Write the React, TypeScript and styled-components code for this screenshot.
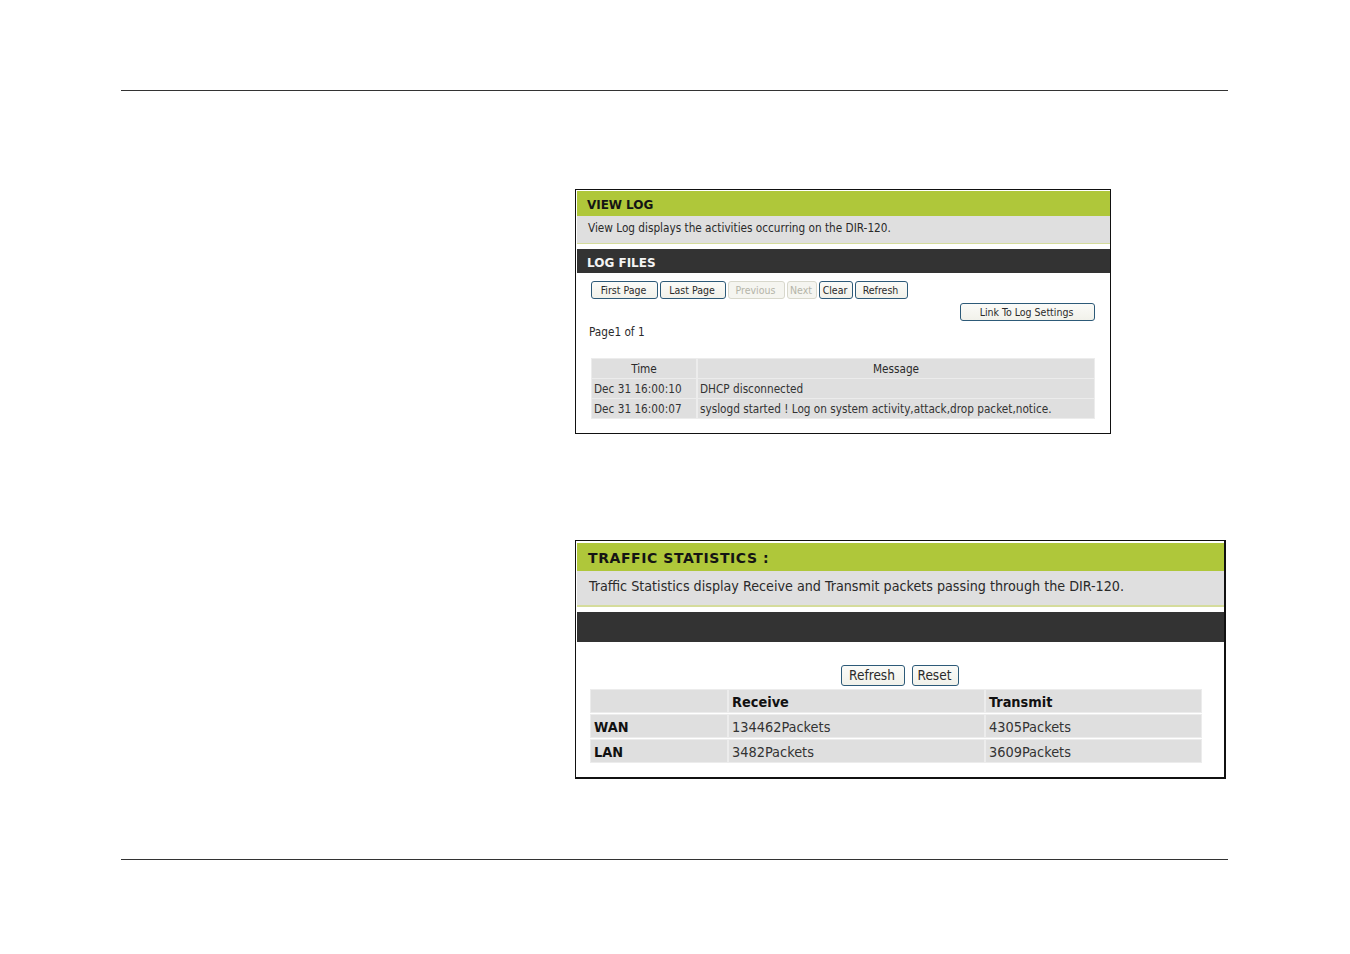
import React from 'react';
import styled, { createGlobalStyle } from 'styled-components';

const GlobalStyle = createGlobalStyle`
  html, body {
    margin: 0;
    padding: 0;
    background: #fff;
  }
  body {
    font-family: "DejaVu Sans Condensed", "DejaVu Sans", sans-serif;
    font-stretch: condensed;
    color: #222;
  }
`;

const Sheet = styled.div`
  width: 1350px;
  height: 954px;
  box-sizing: border-box;
  padding: 90px 122px 0 121px;
  display: flex;
  flex-direction: column;
  overflow: hidden;
`;

const Rule = styled.div<{ $top?: number }>`
  height: 1px;
  background: #333;
  margin-top: ${({ $top }) => $top ?? 0}px;
  flex: none;
`;

const Shot = styled.section<{ $width: number; $top: number; $thick?: boolean }>`
  box-sizing: border-box;
  width: ${({ $width }) => $width}px;
  margin-left: 454px;
  margin-top: ${({ $top }) => $top}px;
  border: 1px solid #111;
  border-width: ${({ $thick }) => ($thick ? '1px 2px 2px 1px' : '1px')};
  padding: ${({ $thick }) => ($thick ? 2 : 1)}px 0 ${({ $thick }) => ($thick ? 12 : 14)}px 1px;
  flex: none;
  background: #fff;
`;

const Title = styled.h2<{ $big?: boolean }>`
  margin: 0;
  height: ${({ $big }) => ($big ? 28 : 25)}px;
  line-height: ${({ $big }) => ($big ? 30 : 29)}px;
  padding-left: ${({ $big }) => ($big ? 11 : 10)}px;
  background: #afc73a;
  color: #141414;
  font-family: "DejaVu Sans", sans-serif;
  font-stretch: normal;
  font-size: ${({ $big }) => ($big ? 14 : 12)}px;
  font-weight: 700;
  letter-spacing: ${({ $big }) => ($big ? 0.58 : -0.05)}px;
`;

const Intro = styled.p<{ $big?: boolean }>`
  margin: 0;
  box-sizing: border-box;
  height: ${({ $big }) => ($big ? 36 : 28)}px;
  line-height: ${({ $big }) => ($big ? 30 : 24)}px;
  padding-left: ${({ $big }) => ($big ? 12 : 11)}px;
  background: #dfdfdf;
  border-bottom: ${({ $big }) => ($big ? 2 : 1)}px solid #d5dc9c;
  font-size: ${({ $big }) => ($big ? 14.2 : 11.7)}px;
  color: #2a2a2a;
`;

const DarkBar = styled.h3<{ $big?: boolean }>`
  margin: 5px 0 0;
  height: ${({ $big }) => ($big ? 30 : 24)}px;
  line-height: 28px;
  padding-left: 10px;
  background: #333333;
  color: #f4f4f4;
  font-family: "DejaVu Sans", sans-serif;
  font-stretch: normal;
  font-size: 12px;
  font-weight: 700;
  letter-spacing: 0;
`;

const Buttons = styled.div<{ $center?: boolean }>`
  display: flex;
  gap: ${({ $center }) => ($center ? 7 : 2)}px;
  justify-content: ${({ $center }) => ($center ? 'center' : 'flex-start')};
  padding: ${({ $center }) => ($center ? '23px 1px 0 0' : '8px 0 0 14px')};
`;

const SettingsRow = styled.div`
  display: flex;
  justify-content: flex-end;
  padding: 4px 15px 0 0;
`;

const Btn = styled.button<{ $w: number; $h?: number; $big?: boolean }>`
  box-sizing: border-box;
  width: ${({ $w }) => $w}px;
  height: ${({ $h }) => $h ?? 18}px;
  padding: 0 2px 0 0;
  border: 1px solid #2d5a78;
  border-radius: 3px;
  background: linear-gradient(#fbfbf8, #f1f1ea);
  color: #2a2a2a;
  font-family: inherit;
  font-stretch: inherit;
  font-size: ${({ $big }) => ($big ? 13.5 : 10.5)}px;
  line-height: 1;
  &:disabled {
    border-color: #d8d8cc;
    color: #b4b4a8;
    background: #f5f5f0;
  }
`;

const PageNote = styled.p`
  margin: 0;
  padding: 1px 0 0 12px;
  height: 37px;
  box-sizing: border-box;
  line-height: 20px;
  font-size: 11.7px;
  color: #2a2a2a;
`;

const Grid = styled.table<{ $big?: boolean }>`
  border-collapse: separate;
  border-spacing: ${({ $big }) => ($big ? '2px 3px' : '2px 1px')};
  table-layout: fixed;
  margin: ${({ $big }) => ($big ? 1 : 0)}px 0 0 ${({ $big }) => ($big ? 12 : 13)}px;
  width: ${({ $big }) => ($big ? 614 : 506)}px;
  font-size: ${({ $big }) => ($big ? 14.4 : 11.7)}px;
  color: #2a2a2a;
`;

const HeadCell = styled.th<{ $big?: boolean; $w?: number }>`
  width: ${({ $w }) => ($w ? `${$w}px` : 'auto')};
  height: ${({ $big }) => ($big ? 20 : 19)}px;
  padding: ${({ $big }) => ($big ? '2px 3px 0' : '0 2px')};
  box-sizing: content-box;
  background: #dfdfdf;
  box-shadow: 0 0 0 1px #ececec;
  font-weight: ${({ $big }) => ($big ? 700 : 400)};
  text-align: ${({ $big }) => ($big ? 'left' : 'center')};
  color: ${({ $big }) => ($big ? '#111' : '#2a2a2a')};
`;

const Cell = styled.td<{ $big?: boolean; $strong?: boolean }>`
  height: ${({ $big }) => ($big ? 20 : 19)}px;
  padding: ${({ $big }) => ($big ? '2px 3px 0' : '0 2px')};
  background: #dfdfdf;
  box-shadow: 0 0 0 1px #ececec;
  white-space: nowrap;
  overflow: hidden;
  font-weight: ${({ $strong }) => ($strong ? 700 : 400)};
  color: ${({ $strong }) => ($strong ? '#111' : '#333')};
`;

const logRows = [
  ['Dec 31 16:00:10', 'DHCP disconnected'],
  ['Dec 31 16:00:07', 'syslogd started ! Log on system activity,attack,drop packet,notice.'],
];

const trafficRows = [
  ['WAN', '134462Packets', '4305Packets'],
  ['LAN', '3482Packets', '3609Packets'],
];

export default function App() {
  return (
    <Sheet>
      <GlobalStyle />
      <Rule />

      <Shot $width={536} $top={98}>
        <Title>VIEW LOG</Title>
        <Intro>View Log displays the activities occurring on the DIR-120.</Intro>
        <DarkBar>LOG FILES</DarkBar>
        <Buttons>
          <Btn $w={67}>First Page</Btn>
          <Btn $w={66}>Last Page</Btn>
          <Btn $w={57} disabled>Previous</Btn>
          <Btn $w={30} disabled>Next</Btn>
          <Btn $w={34}>Clear</Btn>
          <Btn $w={53}>Refresh</Btn>
        </Buttons>
        <SettingsRow>
          <Btn $w={135}>Link To Log Settings</Btn>
        </SettingsRow>
        <PageNote>Page1 of 1</PageNote>
        <Grid>
          <thead>
            <tr>
              <HeadCell $w={100}>Time</HeadCell>
              <HeadCell>Message</HeadCell>
            </tr>
          </thead>
          <tbody>
            {logRows.map(([time, message]) => (
              <tr key={time}>
                <Cell>{time}</Cell>
                <Cell>{message}</Cell>
              </tr>
            ))}
          </tbody>
        </Grid>
      </Shot>

      <Shot $width={651} $top={106} $thick>
        <Title $big>TRAFFIC STATISTICS :</Title>
        <Intro $big>Traffic Statistics display Receive and Transmit packets passing through the DIR-120.</Intro>
        <DarkBar $big />
        <Buttons $center>
          <Btn $w={64} $h={21} $big>Refresh</Btn>
          <Btn $w={47} $h={21} $big>Reset</Btn>
        </Buttons>
        <Grid $big>
          <thead>
            <tr>
              <HeadCell $big $w={130} />
              <HeadCell $big $w={249}>Receive</HeadCell>
              <HeadCell $big>Transmit</HeadCell>
            </tr>
          </thead>
          <tbody>
            {trafficRows.map(([name, rx, tx]) => (
              <tr key={name}>
                <Cell $big $strong>{name}</Cell>
                <Cell $big>{rx}</Cell>
                <Cell $big>{tx}</Cell>
              </tr>
            ))}
          </tbody>
        </Grid>
      </Shot>

      <Rule $top={80} />
    </Sheet>
  );
}
